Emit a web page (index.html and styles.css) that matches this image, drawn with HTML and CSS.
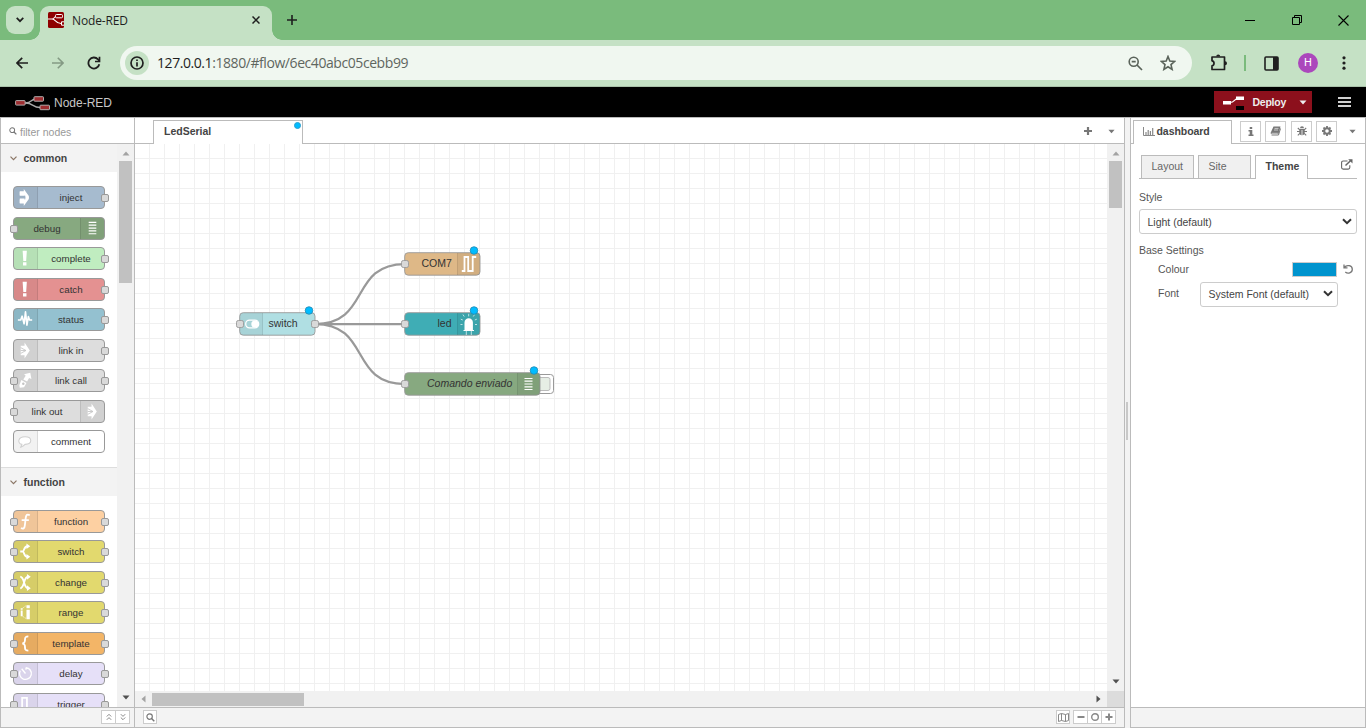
FILE: index.html
```html
<!DOCTYPE html>
<html lang="en">
<head>
<meta charset="utf-8">
<title>Node-RED</title>
<link rel="stylesheet" href="styles.css">
</head>
<body>
<svg class="defs" width="0" height="0">
  <defs>
    <symbol id="i-inject" viewBox="0 0 24 22"><path fill="#fff" d="M6 4.800h4.200V2L15.500 9.500v3L10.200 20v-2.800H6v-4h6v-4.400H6z"/><path fill="#fff" d="M6 4.800h5v4H6zM6 12h5v4.800H6zM11 6l4.500 5L11 16l1.500-5z"/></symbol>
    <symbol id="i-debug" viewBox="0 0 24 22"><path stroke="#fff" stroke-width="1.300" d="M8 4.500h8M8 7.500h8M8 10.500h8M8 13.500h8M8 16.500h8"/></symbol>
    <symbol id="i-alert" viewBox="0 0 24 22"><path fill="#fff" d="M9 3h4.400l-.7 10.500H9.700zM9.400 15h3.600v3.300H9.400z"/></symbol>
    <symbol id="i-status" viewBox="0 0 24 22"><path fill="none" stroke="#fff" stroke-width="1.700" stroke-linejoin="round" d="M4 11.500h3l1.500-4 2 8L12 3l1.500 14 1.500-9 1.200 3.500H19"/></symbol>
    <symbol id="i-link" viewBox="0 0 24 22"><path fill="#fff" d="M7 6h4V2.500L16.500 11 11 19.500V16H7z"/><path stroke="#c4c4c4" stroke-width=".9" fill="none" d="M7 8l5.500 3L7 14M7 11h5.500"/></symbol>
    <symbol id="i-call" viewBox="0 0 24 22"><path fill="#fff" d="M10.500 4.500L17 3l1.200 6.500-2.500-1-2 3.500-4-2 2.500-4zM5.500 16l2.200-5.500 5.300 3-2.500 4.500L6 18.500z"/><circle cx="9.700" cy="14.300" r="1.300" fill="#c4c4c4"/></symbol>
    <symbol id="i-comment" viewBox="0 0 24 22"><path fill="#fff" stroke="#d0d0d0" stroke-width="1.100" d="M7 17l1.200-3C3 12.800 4 6 11.500 6c8 0 8 8 0 8C10 15.800 8.500 16.500 7 17z"/></symbol>
    <symbol id="i-function" viewBox="0 0 24 22"><path fill="none" stroke="#fff" stroke-width="1.900" d="M16.500 4.500c-3-1.800-4 0-4.300 3L11.300 15c-.3 3-1.500 4.200-4 2.800M8 9.500h7.500"/></symbol>
    <symbol id="i-switch" viewBox="0 0 24 22"><path fill="none" stroke="#fff" stroke-width="2" d="M6.500 11H9c2 0 1-5.500 5-5.500M9 11c2 0 1 5.500 5 5.500"/><path fill="#fff" d="M13 2.500l4 3-4 3zM13 13.500l4 3-4 3z"/></symbol>
    <symbol id="i-change" viewBox="0 0 24 22"><path fill="none" stroke="#fff" stroke-width="1.900" d="M6.500 5c4.500 0 3.500 12 8 12M6.500 17c4.500 0 3.500-12 8-12"/><path fill="#fff" d="M13.500 2l4 3-4 3zM13.500 14l4 3-4 3z"/></symbol>
    <symbol id="i-range" viewBox="0 0 24 22"><path fill="#fff" d="M7 9h2v6H7zM7 6.500h2V8H7zM13 8h3.500v10H13zM13 3.500h3.500v3H13z"/><path fill="none" stroke="#fff" stroke-width=".7" stroke-dasharray="1.500 1" d="M9 6.500l4-3M9 15l4 2.500"/></symbol>
    <symbol id="i-template" viewBox="0 0 24 22"><path fill="none" stroke="#fff" stroke-width="2" d="M15 3.500c-3 0-3.500.7-3.500 3 0 3-.3 4.200-2.800 4.500 2.500.3 2.800 1.500 2.800 4.500 0 2.300.5 3 3.500 3"/></symbol>
    <symbol id="i-delay" viewBox="0 0 24 22"><path fill="none" stroke="#fff" stroke-width="1.400" d="M12.500 4.800A6.200 6.200 0 1 1 6.500 8M12.500 4.800v2.200M8 6l4 5"/></symbol>
    <symbol id="i-trigger" viewBox="0 0 24 22"><path fill="none" stroke="#fff" stroke-width="1.900" d="M6 18h2.500V4h5v14H17"/></symbol>
    <symbol id="i-caret" viewBox="0 0 8 5"><path fill="currentColor" d="M.5.500h7L4 4.500z"/></symbol>
    <symbol id="i-search" viewBox="0 0 10 10"><circle cx="4" cy="4" r="3" fill="none" stroke="currentColor" stroke-width="1.300"/><path stroke="currentColor" stroke-width="1.600" d="M6.200 6.200L9.200 9.200"/></symbol>
    <symbol id="i-select" viewBox="0 0 10 7"><path fill="none" stroke="#333" stroke-width="2" d="M1 1.200l4 4 4-4"/></symbol>
  </defs>
</svg>

<div class="window">
  <div class="tabstrip">
    <div class="tab-search"><svg width="8" height="6" viewBox="0 0 8 6"><path fill="none" stroke="#1f1f1f" stroke-width="1.700" d="M.700.900L4 4.200 7.300.900"/></svg></div>
    <div class="browser-tab">
      <svg class="favicon" width="16" height="16" viewBox="0 0 16 16"><rect width="16" height="16" rx="1.500" fill="#8f0000"/><path fill="none" stroke="#fff" stroke-width="1.100" d="M0 7h4c3 0 2-3 5-3M4 7c4 0 3 4.500 9 4.500"/><rect x="7.500" y="2.500" width="7" height="3.300" rx="1" fill="#8f0000" stroke="#fff"/><path d="M16 9.800h-2.500v3.400H16" fill="none" stroke="#fff"/></svg>
      <span class="tab-title">Node-RED</span>
      <svg width="8" height="8" viewBox="0 0 8 8"><path stroke="#1f1f1f" stroke-width="1.500" d="M.5.500l7 7M7.500.500l-7 7"/></svg>
    </div>
    <svg class="new-tab" width="10" height="10" viewBox="0 0 10 10"><path stroke="#1f1f1f" stroke-width="1.600" d="M5 0v10M0 5h10"/></svg>
    <div class="window-buttons">
      <svg width="10" height="11" viewBox="0 0 10 11"><path stroke="#000" d="M0 5.500h10"/></svg>
      <svg width="11" height="11" viewBox="0 0 11 11"><path fill="none" stroke="#000" d="M1.500 2.500h7v7h-7zM3.500 2V.500h7v7H9"/></svg>
      <svg width="11" height="11" viewBox="0 0 11 11"><path stroke="#000" stroke-width="1.100" d="M.5.500l10 10M10.500.500l-10 10"/></svg>
    </div>
  </div>

  <div class="toolbar">
    <svg class="nav" width="12" height="12" viewBox="0 0 12 12"><path fill="none" stroke="#1f1f1f" stroke-width="1.700" d="M12 6H1.200M6.200.800L1 6l5.200 5.200"/></svg>
    <svg class="nav" width="12" height="12" viewBox="0 0 12 12"><path fill="none" stroke="#849a84" stroke-width="1.600" d="M0 6h10.800M5.800.800L11 6l-5.200 5.200"/></svg>
    <svg class="nav reload" width="14" height="14" viewBox="0 0 14 14"><path fill="none" stroke="#1f1f1f" stroke-width="1.800" d="M12.300 8.200A5.500 5.500 0 1 1 11 3.300L12.300 4.700"/><path fill="none" stroke="#1f1f1f" stroke-width="1.700" d="M12.500.800v4.700H8"/></svg>
    <div class="omnibox">
      <span class="site-info"><svg width="14" height="14" viewBox="0 0 14 14"><circle cx="7" cy="7" r="6" fill="none" stroke="#1f1f1f" stroke-width="1.700"/><path stroke="#1f1f1f" stroke-width="1.700" d="M7 6.200v4.300M7 3.500v1.600"/></svg></span>
      <span class="url"><b>127.0.0.1</b>:1880/#flow/6ec40abc05cebb99</span>
      <svg class="zoom-out" width="15" height="15" viewBox="0 0 15 15"><circle cx="5.700" cy="5.700" r="4.500" fill="none" stroke="#5a635a" stroke-width="1.600"/><path stroke="#5a635a" stroke-width="1.700" d="M9 9l5 5M3.700 5.700h4"/></svg>
      <svg width="16" height="16" viewBox="0 0 16 16"><path fill="none" stroke="#5a635a" stroke-width="1.600" d="M8 1.500l1.800 4.500 4.900.4-3.700 3.200 1.100 4.800L8 11.800l-4.100 2.600L5 9.600 1.300 6.400 6.200 6z"/></svg>
    </div>
    <svg class="puzzle" width="18" height="18" viewBox="0 0 18 18"><path fill="none" stroke="#1f1f1f" stroke-width="1.700" stroke-linejoin="round" d="M2 3h12.500v12.500H2v-3.700c2.700-.3 2.700-4.700 0-5z"/><path fill="#1f1f1f" d="M6.200 2.500a2 2 0 0 1 4 0zM15 7.200a2 2 0 0 1 0 4z"/></svg>
    <span class="divider"></span>
    <svg class="panel-icon" width="15" height="15" viewBox="0 0 15 15"><rect x="1" y="1" width="13" height="13" rx="1" fill="none" stroke="#1f1f1f" stroke-width="1.600"/><path fill="#1f1f1f" d="M9 1h5v13H9z"/></svg>
    <span class="avatar">H</span>
    <svg class="kebab" width="4" height="14" viewBox="0 0 4 14"><g fill="#1f1f1f"><circle cx="2" cy="1.800" r="1.600"/><circle cx="2" cy="7" r="1.600"/><circle cx="2" cy="12.200" r="1.600"/></g></svg>
  </div>

  <div class="header">
    <svg class="logo" width="36" height="16" viewBox="0 0 36 16"><path fill="none" stroke="#aaa" stroke-width="1.300" d="M10 8c8 0 5-4 11-4M10 8c9 0 7 4.500 15 4.500"/><g fill="#9d2d30" stroke="#bbb" stroke-width=".9"><rect x=".6" y="5.600" width="9.500" height="4.500" rx=".7"/><rect x="19" y="1.700" width="9.500" height="4.500" rx=".7"/><rect x="25" y="10.200" width="9.500" height="4.500" rx=".7"/></g></svg>
    <span class="brand">Node-RED</span>
    <div class="deploy">
      <svg width="22" height="16" viewBox="0 0 22 16"><path fill="none" stroke="#fff" stroke-width="1.200" d="M7 8.500c5 0 4-4 8-4"/><path fill="#fff" d="M0 7h8v3.500H0zM13 2.500h8V6h-8z"/><path d="M13 12h8v4h-8z"/></svg>
      <span>Deploy</span>
      <svg width="8" height="5"><use href="#i-caret"/></svg>
    </div>
    <svg class="menu" width="13" height="11" viewBox="0 0 13 11"><path stroke="#d0d0d0" stroke-width="2" d="M0 1h13M0 5h13M0 9h13"/></svg>
  </div>

  <div class="editor">
    <div class="palette">
      <div class="filter"><svg width="8" height="8"><use href="#i-search"/></svg><span>filter nodes</span></div>
      <div class="palette-body">
        <div class="palette-list">
          <div class="category"><svg width="7" height="5" viewBox="0 0 7 5"><path d="M.5.700l3 3 3-3"/></svg>common</div>
          <div class="nodes">
            <div class="node out inject"><i><svg><use href="#i-inject"/></svg></i><span>inject</span></div>
            <div class="node in flip debug"><i><svg><use href="#i-debug"/></svg></i><span>debug</span></div>
            <div class="node out complete"><i><svg><use href="#i-alert"/></svg></i><span>complete</span></div>
            <div class="node out catch"><i><svg><use href="#i-alert"/></svg></i><span>catch</span></div>
            <div class="node out status"><i><svg><use href="#i-status"/></svg></i><span>status</span></div>
            <div class="node out link"><i><svg><use href="#i-link"/></svg></i><span>link in</span></div>
            <div class="node in out link"><i><svg><use href="#i-call"/></svg></i><span>link call</span></div>
            <div class="node in flip link"><i><svg><use href="#i-link"/></svg></i><span>link out</span></div>
            <div class="node comment"><i><svg><use href="#i-comment"/></svg></i><span>comment</span></div>
          </div>
          <div class="category second"><svg width="7" height="5" viewBox="0 0 7 5"><path d="M.5.700l3 3 3-3"/></svg>function</div>
          <div class="nodes">
            <div class="node in out function"><i><svg><use href="#i-function"/></svg></i><span>function</span></div>
            <div class="node in out logic"><i><svg><use href="#i-switch"/></svg></i><span>switch</span></div>
            <div class="node in out logic"><i><svg><use href="#i-change"/></svg></i><span>change</span></div>
            <div class="node in out logic"><i><svg><use href="#i-range"/></svg></i><span>range</span></div>
            <div class="node in out template"><i><svg><use href="#i-template"/></svg></i><span>template</span></div>
            <div class="node in out timer"><i><svg><use href="#i-delay"/></svg></i><span>delay</span></div>
            <div class="node in out timer"><i><svg><use href="#i-trigger"/></svg></i><span>trigger</span></div>
          </div>
        </div>
        <div class="vscroll"><svg class="up" width="8" height="5"><use href="#i-caret"/></svg><div class="thumb"></div><svg class="down" width="8" height="5"><use href="#i-caret"/></svg></div>
      </div>
      <div class="footer palette-footer">
        <span class="button"><svg width="6" height="8" viewBox="0 0 6 8"><path d="M.8 3.500L3 1.300l2.200 2.200M.8 6.800L3 4.600l2.200 2.200"/></svg></span>
        <span class="button"><svg width="6" height="8" viewBox="0 0 6 8"><path d="M.8 1.200L3 3.400l2.200-2.200M.8 4.500L3 6.700l2.200-2.200"/></svg></span>
      </div>
    </div>

    <div class="workspace">
      <div class="flow-tabs">
        <div class="flow-tab">LedSerial<span class="changed"></span></div>
        <svg class="add" width="8" height="8" viewBox="0 0 8 8"><path stroke="#777" stroke-width="2.200" d="M4 0v8M0 4h8"/></svg>
        <svg class="list" width="7" height="5"><use href="#i-caret"/></svg>
      </div>
      <div class="chart-row">
        <svg class="chart" width="972" height="547" viewBox="135 144 972 547">
          <defs><pattern id="grid" x="149" y="158" width="15" height="15" patternUnits="userSpaceOnUse"><path fill="#f0f0f0" d="M0 0h15v1H1v14H0z"/></pattern></defs>
          <rect x="135" y="144" width="972" height="547" fill="url(#grid)"/>
          <g fill="none" stroke="#999" stroke-width="2.250"><path d="M315 324C371 324 349 264 405 264M315 324h90M315 324c56 0 34 60 90 60"/></g>
          <g stroke="#999">
            <rect x="532" y="374.500" width="21.500" height="19" rx="3" fill="#fff"/>
            <rect x="536" y="377.500" width="14" height="13" rx="2" fill="#e6eee5" stroke="#bbb"/>
          </g>
          <g stroke="#999" stroke-width=".9">
            <rect x="239.700" y="312.700" width="75.300" height="22.500" rx="3.500" fill="#b0dfe3"/>
            <rect x="404.700" y="252.700" width="75.300" height="22.500" rx="3.500" fill="#deb887"/>
            <rect x="404.700" y="312.700" width="75.300" height="22.500" rx="3.500" fill="#3fadb5"/>
            <rect x="404.700" y="372.700" width="135.300" height="22.500" rx="3.500" fill="#87a980"/>
          </g>
          <g fill="#000" fill-opacity=".05">
            <path d="M243 313h19.500v22H243a3 3 0 0 1-3-3v-16a3 3 0 0 1 3-3zM457.500 253H477a3 3 0 0 1 3 3v16a3 3 0 0 1-3 3h-19.500zM457.500 313H477a3 3 0 0 1 3 3v16a3 3 0 0 1-3 3h-19.500zM517.500 373H537a3 3 0 0 1 3 3v16a3 3 0 0 1-3 3h-19.500z"/>
          </g>
          <g stroke="#000" stroke-opacity=".1"><path d="M262.500 313v22M457.500 253v22M457.500 313v22M517.500 373v22"/></g>
          <rect x="245.700" y="320.200" width="13" height="7.600" rx="3.800" fill="none" stroke="#fff" stroke-width="1.300"/><circle cx="254.900" cy="324" r="3.600" fill="#fff"/>
          <path fill="none" stroke="#fff" stroke-width="1.800" d="M461.800 271h2.700v-14h3.700v14h4.500v-14h3.500"/>
          <path fill="#fff" d="M464.500 330v-7.500a4.200 4.200 0 0 1 8.400 0v7.500h1.100v1h-10.500v-1z"/>
          <path stroke="#fff" stroke-opacity=".75" stroke-width=".9" d="M466.300 331v4M471.300 331v4M468.700 313.800v2.600M464.200 316.500l-1.300-2M473.300 316.500l1.300-2M462.800 320l-2-.8M474.800 320l2-.8M462.500 324.500h-2M475 324.500h2"/>
          <path stroke="#fff" stroke-width="1.200" d="M524.500 378.500h8M524.500 381.200h8M524.500 384h8M524.500 386.800h8M524.500 389.500h8"/>
          <g fill="#d9d9d9" stroke="#999" stroke-width=".9">
            <rect x="236.500" y="320.500" width="7" height="7" rx="1.800"/><rect x="311.500" y="320.500" width="7" height="7" rx="1.800"/>
            <rect x="401.500" y="260.500" width="7" height="7" rx="1.800"/><rect x="401.500" y="320.500" width="7" height="7" rx="1.800"/><rect x="401.500" y="380.500" width="7" height="7" rx="1.800"/>
          </g>
          <g fill="#00bcff" stroke="#2488b0" stroke-width=".8">
            <circle cx="309" cy="310.500" r="3.800"/><circle cx="474" cy="250.500" r="3.800"/><circle cx="474" cy="310.500" r="3.800"/><circle cx="534" cy="370.500" r="3.800"/>
          </g>
          <g class="labels">
            <text x="268.500" y="327">switch</text><text x="421.500" y="267">COM7</text><text x="437.500" y="327">led</text><text x="427" y="387" font-style="italic">Comando enviado</text>
          </g>
        </svg>
        <div class="vscroll"><svg class="up" width="8" height="5"><use href="#i-caret"/></svg><div class="thumb short"></div><svg class="down" width="8" height="5"><use href="#i-caret"/></svg></div>
      </div>
      <div class="hscroll">
        <svg width="5" height="8" viewBox="0 0 5 8"><path fill="#a3a3a3" d="M4.500.500v7L.5 4z"/></svg><div class="hthumb"></div><svg class="right" width="5" height="8" viewBox="0 0 5 8"><path fill="#505050" d="M.5.500v7L4.500 4z"/></svg><span class="corner"></span>
      </div>
      <div class="footer workspace-footer">
        <span class="button find"><svg width="9" height="9"><use href="#i-search"/></svg></span>
        <span class="button map"><svg width="11" height="9" viewBox="0 0 11 9"><path d="M.5 1.500l3-1 4 1 3-1v7l-3 1-4-1-3 1zM3.500.500v7M7.500 1.500v7"/></svg></span>
        <span class="button"><svg width="8" height="8" viewBox="0 0 8 8"><path class="thick" d="M.5 4h7"/></svg></span>
        <span class="button"><svg width="8" height="8" viewBox="0 0 8 8"><circle class="ring" cx="4" cy="4" r="3.300"/></svg></span>
        <span class="button"><svg width="8" height="8" viewBox="0 0 8 8"><path class="thick" d="M.5 4h7M4 .500v7"/></svg></span>
      </div>
    </div>

    <div class="separator"><span></span></div>

    <div class="sidebar">
      <div class="side-tabs">
        <div class="side-tab"><svg width="12" height="9" viewBox="0 0 12 9"><path fill="none" stroke="#888" d="M.5 0v8.500H12"/><path stroke="#888" stroke-width="1.200" d="M3 5v3M5.200 3v5M7.400 4v4M9.700 1v7"/></svg>dashboard</div>
        <span class="side-button first"><svg width="6" height="9" viewBox="0 0 6 9"><path fill="#777" d="M1.700 0h2.500v2H1.700zM.5 3h3.800v4.500h1.200V9H.5V7.500h1.200v-3H.5z"/></svg></span>
        <span class="side-button"><svg width="11" height="10" viewBox="0 0 11 10"><path fill="#777" d="M3.500.5h7L8.500 8h-7c-1 0-1-1-.5-2z"/><path stroke="#fff" stroke-width=".6" d="M4.500 2.400h4M4 4h4M1.500 7.300h6.300"/><path stroke="#777" d="M1.500 9h7l2-6.500" fill="none"/></svg></span>
        <span class="side-button third"><svg width="10" height="10" viewBox="0 0 10 10"><path fill="#777" d="M3 2.300a2 2 0 0 1 4 0zM2.300 3h5.400v3.500a2.700 2.700 0 0 1-5.400 0z"/><path stroke="#777" stroke-width="1.100" fill="none" d="M.8 2l2 1.800M9.200 2l-2 1.800M0 5.500h10M.8 9.300l2-2M9.200 9.300l-2-2"/><path stroke="#fff" stroke-width=".8" d="M5 4v5"/></svg></span>
        <span class="side-button"><svg width="10" height="10" viewBox="0 0 10 10"><circle cx="5" cy="5" r="2.800" fill="none" stroke="#777" stroke-width="2"/><path stroke="#777" stroke-width="1.800" d="M5 0v2M5 8v2M0 5h2M8 5h2M1.500 1.500l1.300 1.300M7.200 7.200l1.300 1.300M8.500 1.500L7.200 2.800M1.500 8.500l1.300-1.300"/></svg></span>
        <svg class="list" width="7" height="5"><use href="#i-caret"/></svg>
      </div>
      <div class="side-content">
        <div class="sub-tabs">
          <span>Layout</span><span>Site</span><span class="active">Theme</span>
          <svg width="12" height="11" viewBox="0 0 12 11"><path fill="none" stroke="#666" stroke-width="1.100" d="M6.500 2H2.200C1.200 2 .6 2.600.6 3.500v5c0 1 .6 1.600 1.600 1.600h5c1 0 1.600-.6 1.600-1.600V6.200"/><path stroke="#666" stroke-width="1.500" d="M4.500 6.500L10 1.200"/><path fill="#666" d="M7.200.200h4.300v4.300z"/></svg>
        </div>
        <div class="field-title">Style</div>
        <div class="select wide">Light (default)<svg width="10" height="7"><use href="#i-select"/></svg></div>
        <div class="field-title base">Base Settings</div>
        <div class="field"><span>Colour</span><div class="swatch"></div><svg width="10" height="10" viewBox="0 0 10 10"><path fill="none" stroke="#777" stroke-width="1.300" d="M1 .500v3.300h3.500M1.300 3.300C4 .200 9.300 1.500 9.300 5.300c0 3.700-4.500 5-7 2.700"/></svg></div>
        <div class="field font"><span>Font</span><div class="select">System Font (default)<svg width="10" height="7"><use href="#i-select"/></svg></div></div>
      </div>
      <div class="footer"></div>
    </div>
  </div>
</div>
</body>
</html>
```

FILE: styles.css
```css
*, *::before, *::after { box-sizing: border-box; }
body { margin: 0; font: 10.5px/15px "Liberation Sans", Arial, sans-serif; color: #555; overflow: hidden; }
svg { display: block; flex: none; }
.defs { position: absolute; }
.window { width: 1366px; height: 728px; display: flex; flex-direction: column; background: #fff; }

/* Browser frame */
.tabstrip { height: 40px; flex: none; background: #7abb7c; display: flex; }
.tab-search { width: 28px; height: 28px; margin: 6px 12px 0 6px; border-radius: 9px; background: #c5e1c5; display: flex; align-items: center; justify-content: center; }
.browser-tab { width: 232px; margin: 6px 0 0 -6px; border-radius: 9px 9px 0 0; background: #c5e1c5; display: flex; align-items: center; padding: 0 12px 6px 8px; position: relative; }
.browser-tab::before, .browser-tab::after { content: ""; position: absolute; bottom: 0; width: 10px; height: 10px; }
.browser-tab::before { left: -10px; background: radial-gradient(circle at 0 0, transparent 9.500px, #c5e1c5 10px); }
.browser-tab::after { right: -10px; background: radial-gradient(circle at 100% 0, transparent 9.500px, #c5e1c5 10px); }
.tab-title { flex: 1; margin: 1px 0 0 8px; font: 12px/16px "Open Sans", sans-serif; letter-spacing: -.15px; color: #1f1f1f; }
.new-tab { margin: 15px 0 0 15px; }
.window-buttons { margin-left: auto; display: flex; gap: 36px; padding: 15px 17px 0 0; }
.toolbar { height: 47px; flex: none; background: linear-gradient(#c5e1c5 46px, #a9c1a9 46px); display: flex; align-items: center; padding: 0 20px 1px 16px; }
.nav { margin-right: 24px; }
.nav.reload { margin: 0 19px 0 -1px; }
.omnibox { width: 1072px; height: 34px; border-radius: 17px; background: #f0f7f0; display: flex; align-items: center; padding: 0 16px 0 5px; }
.site-info { width: 24px; height: 24px; border-radius: 50%; background: #c5e1c5; display: flex; align-items: center; justify-content: center; }
.url { flex: 1; margin-left: 8px; font: 14px/20px "Open Sans", sans-serif; letter-spacing: -.43px; color: #5f665f; }
.url b { font-weight: 400; color: #1f1f1f; }
.zoom-out { margin-right: 17px; }
.puzzle { margin-left: 18px; }
.divider { width: 2px; height: 16px; margin-left: 16px; background: #7abb7c; }
.panel-icon { margin-left: 18px; }
.avatar { width: 20px; height: 20px; margin-left: 19px; border-radius: 50%; background: #ab47bc; color: #fff; font: 11px/20px Roboto, sans-serif; text-align: center; }
.kebab { margin-left: 24px; }

/* Application header */
.header { height: 30px; flex: none; background: #000; display: flex; align-items: center; padding: 0 15px; }
.logo { margin-top: 1px; }
.brand { margin-left: 3px; padding-top: 2px; font-size: 12px; color: #c7c7c7; }
.deploy { width: 98px; height: 22px; margin-left: auto; background: #8c101c; color: #eee; display: flex; align-items: center; padding: 0 5px 0 9px; font-weight: 700; letter-spacing: -.25px; }
.deploy span { margin-left: 7.500px; flex: 1; }
.menu { margin-left: 26px; }
.editor { flex: 1; display: flex; min-height: 0; background: #f3f3f3; border-top: 1px solid #bbb; }

/* Palette */
.palette { width: 135px; background: #fff; border: solid #bbb; border-width: 0 1px 1px; display: flex; flex-direction: column; }
.filter { height: 26px; flex: none; border-bottom: 1px solid #bbb; display: flex; align-items: center; padding: 1px 0 0 8px; color: #999; }
.filter svg { color: #777; margin-bottom: 1px; }
.filter span { margin: 2px 0 0 3px; }
.palette-body { flex: 1; min-height: 0; display: flex; }
.palette-list { width: 116px; overflow: hidden; }
.category { height: 28px; background: #f3f3f3; display: flex; align-items: center; padding-left: 8.500px; font-weight: 700; color: #444; }
.category svg { margin-right: 7px; fill: none; stroke: #8a7565; stroke-width: 1.200; }
.category.second { height: 29px; border-top: 1px solid #ddd; margin-top: 14px; }
.nodes { padding: 14px 0 0 12px; display: flex; flex-direction: column; gap: 7.500px; }
.category.second + .nodes { padding-top: 13.500px; }
.node { width: 92px; height: 23px; flex: none; border: 1px solid #999; border-radius: 4px; display: flex; align-items: stretch; position: relative; color: #333; font-size: 9.750px; line-height: 21px; }
.node i { width: 24px; background: rgba(0, 0, 0, .05); border-right: 1px solid rgba(0, 0, 0, .1); border-radius: 3px 0 0 3px; }
.node i svg { width: 23px; height: 21px; }
.node span { flex: 1; text-align: center; }
.node.flip { flex-direction: row-reverse; }
.node.flip i { border: 0; border-left: 1px solid rgba(0, 0, 0, .1); border-radius: 0 3px 3px 0; }
.node.in::before, .node.out::after { content: ""; position: absolute; top: 7px; width: 8px; height: 8px; background: #d9d9d9; border: 1px solid #999; border-radius: 2px; }
.node.in::before { left: -4px; }
.node.out::after { right: -5px; }
.inject { background: #a6bbcf; }
.debug { background: #87a980; }
.complete { background: #c0edc0; }
.catch { background: #e49191; }
.status { background: #94c1d0; }
.link { background: #ddd; }
.comment { background: #fff; }
.function { background: #fdd0a2; }
.logic { background: #e2d96e; }
.template { background: #f3b567; }
.timer { background: #e6e0f8; }

/* Scrollbars */
.vscroll { width: 17px; background: #f1f1f1; display: flex; flex-direction: column; align-items: center; padding: 7px 0; }
.up { color: #a3a3a3; transform: rotate(180deg); }
.thumb { width: 13px; height: 122px; margin-top: 5px; background: #c1c1c1; }
.thumb.short { height: 47px; }
.down { margin-top: auto; color: #505050; }
.hscroll { height: 16px; flex: none; background: #f1f1f1; display: flex; align-items: center; padding-left: 6px; }
.hthumb { width: 152px; height: 13px; margin-left: 6px; background: #c1c1c1; }
.right { margin-left: auto; }
.corner { width: 17px; height: 16px; margin-left: 6px; background: #dcdcdc; }

/* Footers */
.footer { height: 20px; flex: none; background: #f3f3f3; border-top: 1px solid #bbb; display: flex; align-items: center; }
.button { width: 15px; height: 14px; margin-left: -1px; background: #fff; border: 1px solid #ccc; display: flex; align-items: center; justify-content: center; color: #777; }
.button svg { fill: none; stroke: #888; }
.button .thick { stroke-width: 2; }
.button .ring { stroke-width: 1.400; }
.palette-footer { justify-content: flex-end; padding: 0 4px 1px 0; }
.workspace-footer { padding: 0 8px 1px; }
.button.find { width: 14px; margin: 0 auto 0 0; }
.button.find svg { stroke: none; }
.button.map { width: 14px; margin-right: 4px; }

/* Workspace */
.workspace { width: 990px; background: #fff; border: solid #bbb; border-width: 0 1px 1px 0; display: flex; flex-direction: column; }
.flow-tabs { height: 26px; flex: none; display: flex; align-items: center; padding: 0 9px 0 18px; box-shadow: inset 0 -1px #bbb; }
.flow-tab { width: 150px; height: 24px; align-self: flex-end; background: #fff; border: 1px solid #bbb; border-bottom: 0; padding: 3px 0 0 10px; font-weight: 700; color: #444; position: relative; }
.changed { position: absolute; top: 1px; right: 1px; width: 7px; height: 7px; border-radius: 50%; background: #00bcff; border: 1px solid #2b9fd0; }
.add { margin-left: auto; }
.list { margin-left: 16px; color: #777; }
.chart-row { height: 547px; flex: none; display: flex; }
.labels { fill: #333; font-size: 10.500px; }
.separator { width: 5px; display: flex; align-items: flex-start; padding: 284px 0 0 1px; }
.separator span { width: 2px; height: 38px; background: #c8c8c8; }

/* Sidebar */
.sidebar { width: 236px; background: #fff; border: solid #bbb; border-width: 0 1px 1px; display: flex; flex-direction: column; }
.side-tabs { height: 26px; flex: none; display: flex; align-items: center; padding: 0 9px 0 2px; box-shadow: inset 0 -1px #bbb; }
.side-tab { width: 99px; height: 24px; align-self: flex-end; background: #fff; border: 1px solid #bbb; border-bottom: 0; padding: 0 0 2px 9px; display: flex; align-items: center; gap: 1.500px; font-weight: 700; color: #444; letter-spacing: -.05px; }
.side-button { width: 21px; height: 21px; margin-left: 4px; border: 1px solid #ccc; display: flex; align-items: center; justify-content: center; }
.side-button.first { margin-left: 8px; }
.side-button.third { margin-left: 5px; }
.side-tabs .list { margin-left: auto; }
.side-content { flex: 1; padding: 11px 8px 0; }
.sub-tabs { height: 24px; display: flex; gap: 4px; padding-left: 2px; box-shadow: inset 0 -1px #bbb; }
.sub-tabs span { width: 53px; height: 24px; border: 1px solid #bbb; background: #f0f0f0; color: #666; padding: 3px 0 0 9.500px; }
.sub-tabs .active { background: #fff; border-bottom: 0; font-weight: 700; color: #444; }
.sub-tabs svg { margin: 4px 4px 0 auto; }
.field-title { margin-top: 11px; }
.select { width: 138px; height: 25px; border: 1px solid #ccc; border-radius: 3px; background: #fff; display: flex; align-items: center; justify-content: space-between; padding: 1px 4px 0 7.500px; color: #444; }
.select.wide { width: 218px; margin-top: 4px; }
.select svg { margin-bottom: 2px; }
.field-title.base { margin-top: 9px; }
.field { display: flex; align-items: center; padding-left: 19px; height: 15px; margin-top: 4px; }
.swatch { width: 45px; height: 15px; margin: 0 6px 0 auto; background: #0094ce; border: 1px solid #ccc; }
.field > svg { margin: 0 4px 2px 0; }
.field.font { height: 25px; margin-top: 5px; }
.field.font > span { margin-bottom: 2px; }
.field .select { margin: -1px 0 0 21px; }
```
